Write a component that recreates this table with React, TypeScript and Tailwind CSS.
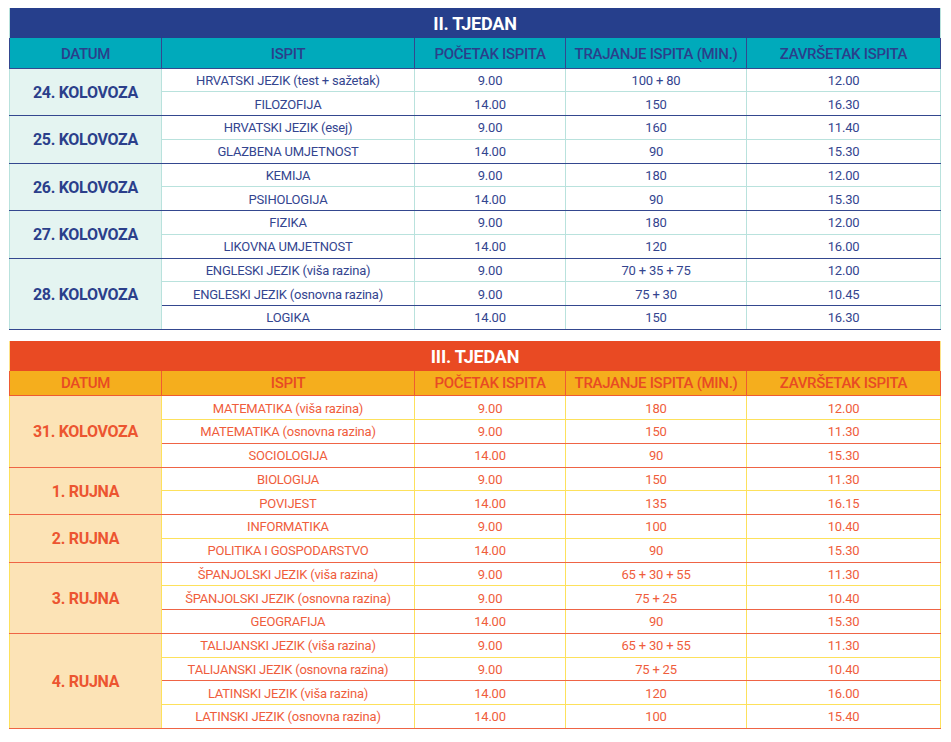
type Row = [string, string, string, string, boolean?];
type Group = { date: string; rows: Row[] };

const week2: Group[] = [
  {
    date: "24. KOLOVOZA",
    rows: [
      ["HRVATSKI JEZIK (test + sažetak)", "9.00", "100 + 80", "12.00"],
      ["FILOZOFIJA", "14.00", "150", "16.30"],
    ],
  },
  {
    date: "25. KOLOVOZA",
    rows: [
      ["HRVATSKI JEZIK (esej)", "9.00", "160", "11.40"],
      ["GLAZBENA UMJETNOST", "14.00", "90", "15.30"],
    ],
  },
  {
    date: "26. KOLOVOZA",
    rows: [
      ["KEMIJA", "9.00", "180", "12.00"],
      ["PSIHOLOGIJA", "14.00", "90", "15.30"],
    ],
  },
  {
    date: "27. KOLOVOZA",
    rows: [
      ["FIZIKA", "9.00", "180", "12.00"],
      ["LIKOVNA UMJETNOST", "14.00", "120", "16.00"],
    ],
  },
  {
    date: "28. KOLOVOZA",
    rows: [
      ["ENGLESKI JEZIK (viša razina)", "9.00", "70 + 35 + 75", "12.00"],
      ["ENGLESKI JEZIK (osnovna razina)", "9.00", "75 + 30", "10.45", true],
      ["LOGIKA", "14.00", "150", "16.30"],
    ],
  },
];

const week3: Group[] = [
  {
    date: "31. KOLOVOZA",
    rows: [
      ["MATEMATIKA (viša razina)", "9.00", "180", "12.00"],
      ["MATEMATIKA (osnovna razina)", "9.00", "150", "11.30", true],
      ["SOCIOLOGIJA", "14.00", "90", "15.30"],
    ],
  },
  {
    date: "1. RUJNA",
    rows: [
      ["BIOLOGIJA", "9.00", "150", "11.30"],
      ["POVIJEST", "14.00", "135", "16.15"],
    ],
  },
  {
    date: "2. RUJNA",
    rows: [
      ["INFORMATIKA", "9.00", "100", "10.40"],
      ["POLITIKA I GOSPODARSTVO", "14.00", "90", "15.30"],
    ],
  },
  {
    date: "3. RUJNA",
    rows: [
      ["ŠPANJOLSKI JEZIK (viša razina)", "9.00", "65 + 30 + 55", "11.30"],
      ["ŠPANJOLSKI JEZIK (osnovna razina)", "9.00", "75 + 25", "10.40", true],
      ["GEOGRAFIJA", "14.00", "90", "15.30"],
    ],
  },
  {
    date: "4. RUJNA",
    rows: [
      ["TALIJANSKI JEZIK (viša razina)", "9.00", "65 + 30 + 55", "11.30"],
      ["TALIJANSKI JEZIK (osnovna razina)", "9.00", "75 + 25", "10.40", true],
      ["LATINSKI JEZIK (viša razina)", "14.00", "120", "16.00"],
      ["LATINSKI JEZIK (osnovna razina)", "14.00", "100", "15.40"],
    ],
  },
];

const themes = {
  blue: {
    outer: "border-x border-[#b9e2dd] border-b border-b-[#34478f]",
    title: "bg-[#263f8c] text-white",
    head: "bg-[#00aabb] text-[#2b3f8b] h-[30px]",
    headCell: "pt-[3px] border-x border-[#34478f] border-b border-b-[#34478f]",
    date: "bg-[#e4f4f1] text-[#2b3f8b]",
    body: "text-[#34458f]",
    vline: "border-x border-[#b9e2dd]",
    soft: "border-b border-b-[#b9e2dd]",
    strong: "border-b border-b-[#34478f]",
  },
  orange: {
    outer: "border-x border-[#fde38a] border-b border-b-[#f0654a]",
    title: "bg-[#e94a23] text-white",
    head: "bg-[#f5ae1d] text-[#e84a24] h-[25px]",
    headCell: "pt-[1px] border-x border-[#ef5a32] border-b border-b-[#ef5a32]",
    date: "bg-[#fce3b6] text-[#ec5530]",
    body: "text-[#ef5d3c]",
    vline: "border-x border-[#fde15c]",
    soft: "border-b border-b-[#fde15c]",
    strong: "border-b border-b-[#ef6445]",
  },
};

const heads = ["DATUM", "ISPIT", "POČETAK ISPITA", "TRAJANJE ISPITA (MIN.)", "ZAVRŠETAK ISPITA"];

function WeekTable({ title, groups, theme }: { title: string; groups: Group[]; theme: keyof typeof themes }) {
  const t = themes[theme];
  return (
    <table className={`w-[931px] table-fixed border-collapse ${t.outer}`}>
      <colgroup>
        <col className="w-[152px]" />
        <col className="w-[253px]" />
        <col className="w-[151px]" />
        <col className="w-[181px]" />
        <col className="w-[194px]" />
      </colgroup>
      <thead>
        <tr className={`h-[30px] ${t.title}`}>
          <th colSpan={5} className="pt-[1px] text-[18px] font-bold tracking-[-0.2px]">
            {title}
          </th>
        </tr>
        <tr className={t.head}>
          {heads.map((h) => (
            <th key={h} className={`text-[15px] font-medium tracking-[-0.3px] ${t.headCell}`}>
              {h}
            </th>
          ))}
        </tr>
      </thead>
      <tbody>
        {groups.map((g) =>
          g.rows.map((r, i) => {
            const last = i === g.rows.length - 1;
            const line = last || r[4] ? t.strong : t.soft;
            return (
              <tr key={g.date + r[0]} className="h-[23.75px]">
                {i === 0 && (
                  <td
                    rowSpan={g.rows.length}
                    className={`pt-[2px] text-center text-[16px] font-bold tracking-[-0.3px] ${t.date} ${t.vline} ${t.strong}`}
                  >
                    {g.date}
                  </td>
                )}
                {r.slice(0, 4).map((c, j) => (
                  <td
                    key={j}
                    className={`p-0 pt-[1px] text-center text-[13px] leading-none tracking-[-0.2px] ${t.body} ${t.vline} ${line}`}
                  >
                    {c}
                  </td>
                ))}
              </tr>
            );
          })
        )}
      </tbody>
    </table>
  );
}

export default function App() {
  return (
    <div className="min-h-screen bg-white pl-[9px] pt-[8px] font-['Roboto',sans-serif]">
      <WeekTable title="II. TJEDAN" groups={week2} theme="blue" />
      <div className="h-[11px]" />
      <WeekTable title="III. TJEDAN" groups={week3} theme="orange" />
    </div>
  );
}
